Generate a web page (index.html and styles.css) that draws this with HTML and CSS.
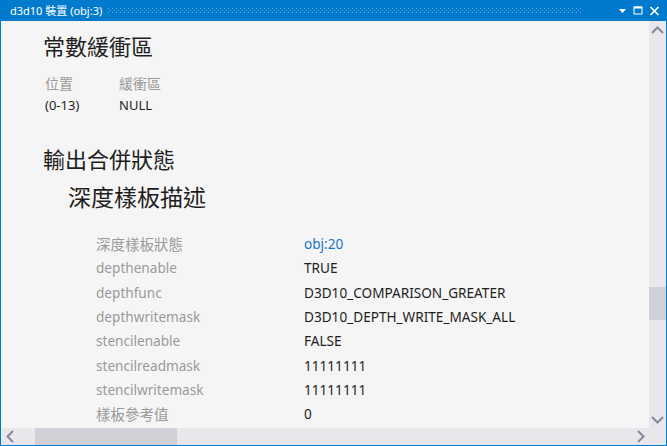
FILE: index.html
```html
<!DOCTYPE html>
<html>
<head>
<meta charset="utf-8">
<link rel="stylesheet" href="styles.css">
</head>
<body>
<div class="window">
  <div class="titlebar">
    <span class="title">d3d10 裝置 (obj:3)</span>
    <span class="grip"></span>
    <span class="btns">
      <svg class="ico" width="9" height="6" viewBox="0 0 9 6"><path d="M1 1h7L4.5 5z" fill="#fff"/></svg>
      <svg class="ico" width="10" height="9" viewBox="0 0 10 9"><rect x="1" y="1" width="8" height="7" fill="none" stroke="#fff" stroke-width="1"/><rect x="1" y="0.5" width="8" height="2" fill="#fff"/></svg>
      <svg class="ico" width="11" height="10" viewBox="0 0 11 10"><path d="M1.5 1l8 8M9.5 1l-8 8" stroke="#fff" stroke-width="1.6"/></svg>
    </span>
  </div>
  <div class="body">
    <div class="viewport">
      <div class="doc">
        <h1 class="h1">常數緩衝區</h1>
        <div class="kv">
          <span class="lbl cjk">位置</span><span class="lbl cjk">緩衝區</span>
          <span class="val">(0-13)</span><span class="val">NULL</span>
        </div>
        <h2 class="h2">輸出合併狀態</h2>
        <h3 class="h3">深度樣板描述</h3>
        <div class="rows">
          <span class="lbl cjk">深度樣板狀態</span><span class="link">obj:20</span>
          <span class="lbl">depthenable</span><span class="val">TRUE</span>
          <span class="lbl">depthfunc</span><span class="val">D3D10_COMPARISON_GREATER</span>
          <span class="lbl">depthwritemask</span><span class="val">D3D10_DEPTH_WRITE_MASK_ALL</span>
          <span class="lbl">stencilenable</span><span class="val">FALSE</span>
          <span class="lbl">stencilreadmask</span><span class="val">11111111</span>
          <span class="lbl">stencilwritemask</span><span class="val">11111111</span>
          <span class="lbl cjk">樣板參考值</span><span class="val">0</span>
        </div>
      </div>
    </div>
    <div class="vscroll">
      <div class="arrow"><svg width="13" height="8" viewBox="0 0 13 8"><path d="M1 7l5.5-5.5L12 7" fill="none" stroke="#868999" stroke-width="2"/></svg></div>
      <div class="vtrack"><div class="vthumb"></div></div>
      <div class="arrow"><svg width="13" height="8" viewBox="0 0 13 8"><path d="M1 1l5.5 5.5L12 1" fill="none" stroke="#868999" stroke-width="2"/></svg></div>
    </div>
  </div>
  <div class="hbar">
    <div class="hscroll">
      <div class="harrow"><svg width="8" height="13" viewBox="0 0 8 13"><path d="M7 1L1.5 6.5 7 12" fill="none" stroke="#868999" stroke-width="2"/></svg></div>
      <div class="htrack"><div class="hthumb"></div></div>
      <div class="harrow"><svg width="8" height="13" viewBox="0 0 8 13"><path d="M1 1l5.5 5.5L1 12" fill="none" stroke="#868999" stroke-width="2"/></svg></div>
    </div>
    <div class="corner"></div>
  </div>
</div>
</body>
</html>
```
FILE: styles.css
```css
* { box-sizing: border-box; }
html, body { margin: 0; padding: 0; }
body {
  font-family: "Noto Sans", "Noto Sans CJK TC", sans-serif;
  background: #f5f5f5;
}
.window {
  width: 667px;
  height: 446px;
  border: 1px solid #007acc;
  border-top: 0;
  display: flex;
  flex-direction: column;
  overflow: hidden;
}
.titlebar {
  height: 21px;
  flex: none;
  background: #007acc;
  color: #fff;
  display: flex;
  align-items: center;
  padding-left: 9px;
  padding-right: 6px;
}
.title {
  font-size: 11px;
  font-family: "Noto Sans", "Noto Sans CJK TC", sans-serif;
  white-space: nowrap;
  line-height: 20px;
}
.grip {
  flex: 1;
  height: 5px;
  margin: 0 37px 0 6px;
  background-image:
    radial-gradient(circle at 0.5px 0.5px, rgba(255,255,255,0.4) 0.5px, transparent 0.6px),
    radial-gradient(circle at 2.5px 2.5px, rgba(255,255,255,0.4) 0.5px, transparent 0.6px);
  background-size: 4px 4px, 4px 4px;
  background-repeat: repeat, repeat;
}
.btns {
  display: flex;
  align-items: center;
  gap: 6px;
}
.ico { display: block; }
.body {
  flex: 1;
  display: flex;
  min-height: 0;
}
.viewport {
  flex: 1;
  overflow: hidden;
  background: #f5f5f5;
}
.doc {
  padding: 10px 0 0 42px;
  color: #1e1e1e;
}
.h1 {
  margin: 0;
  font-weight: normal;
  font-size: 22px;
  line-height: 30px;
}
.kv {
  display: grid;
  grid-template-columns: 74px auto;
  grid-auto-rows: 22px;
  align-items: center;
  margin: 11px 0 0 2px;
  font-size: 13px;
}
.h2 {
  margin: 28px 0 0;
  font-weight: normal;
  font-size: 22px;
  line-height: 30px;
}
.h3 {
  margin: 8px 0 0 25px;
  font-weight: normal;
  font-size: 23px;
  line-height: 30px;
}
.rows {
  display: grid;
  grid-template-columns: 208px auto;
  grid-auto-rows: 24.3px;
  align-items: center;
  margin: 19.5px 0 0 53px;
  font-size: 13.6px;
}
.lbl { color: #9a9a9a; white-space: nowrap; }
.val { color: #1e1e1e; white-space: nowrap; }
.link { color: #1a72c9; }
.cjk { font-size: 14.5px; }
.kv .cjk { font-size: 14px; }
.vscroll {
  width: 17px;
  flex: none;
  background: #e8e8ec;
  display: flex;
  flex-direction: column;
}
.arrow {
  height: 17px;
  display: flex;
  align-items: center;
  justify-content: center;
  flex: none;
}
.vtrack { flex: 1; padding-top: 249px; }
.vthumb {
  width: 17px;
  height: 33px;
  background: #d0d1d7;
}
.hbar {
  height: 17px;
  flex: none;
  display: flex;
}
.hscroll {
  flex: 1;
  display: flex;
  background: #e8e8ec;
}
.harrow {
  width: 17px;
  display: flex;
  align-items: center;
  justify-content: center;
  flex: none;
}
.htrack { flex: 1; padding-left: 17px; }
.hthumb {
  width: 142px;
  height: 17px;
  background: #d0d1d7;
}
.corner {
  width: 17px;
  flex: none;
  background: #e8e8ec;
}
```
